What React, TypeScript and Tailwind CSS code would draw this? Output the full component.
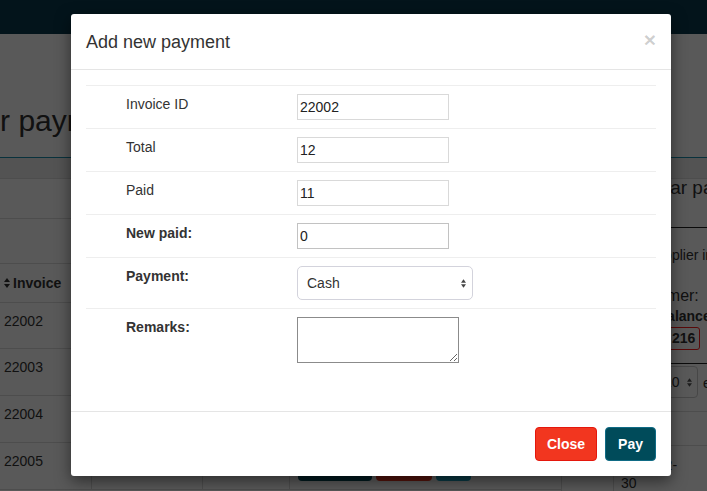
import React from 'react';

const SortIcon: React.FC<{ className?: string }> = ({ className }) => (
  <svg viewBox="0 0 6 10" className={className} fill="currentColor">
    <path d="M3 0 L6 4 H0 Z" />
    <path d="M0 6 H6 L3 10 Z" />
  </svg>
);

const labelCell = 'w-[203px] shrink-0 pl-[40px] pt-[8px] leading-[20px] text-[14px] text-[#333]';
const inputCell = 'flex-1 py-[8px] pl-[8px]';
const textInput =
  'block w-[152px] h-[26px] border bg-white px-[2px] text-[14px] text-[#222] outline-none';

const leftRows = ['22002', '22003', '22004', '22005'];

const App: React.FC = () => {
  return (
    <div className="relative w-[707px] h-[491px] overflow-hidden bg-white font-['Liberation_Sans',Arial,sans-serif] text-[#333]">
      {/* page behind the dialog */}
      <div className="h-[34px] bg-[#093a4d]" />
      <div className="h-[124px] border-b border-[#1a8fae] overflow-hidden">
        <h1 className="pt-[70px] ml-[-100px] whitespace-nowrap text-[30px] leading-[33px] text-[#333]">
          Supplier payments
        </h1>
      </div>
      <div className="h-[21px] bg-[#eeeeee] border-b border-[#ddd]" />

      <div className="flex">
        {/* left table */}
        <div className="w-[561px] shrink-0">
          <div className="h-[40px] border-b border-[#ddd]" />
          <div className="h-[45px] border-b border-[#ddd]" />
          <div className="h-[39px] border-b border-[#ddd] flex items-center pl-[4px] text-[14px] font-bold">
            <SortIcon className="w-[6px] h-[10px] mr-[3px]" />
            Invoice
          </div>
          {leftRows.map((id, i) => (
            <div
              key={id}
              className={`grid grid-cols-[92px_111px_87px_271px] border-b border-[#ddd] ${
                i === 0 ? 'h-[46px]' : 'h-[47px]'
              }`}
            >
              <div className="pl-[4px] pt-[8px] leading-[20px] text-[14px] border-r border-[#ddd]">{id}</div>
              <div className="border-r border-[#ddd]" />
              <div className="border-r border-[#ddd]" />
              <div className="flex gap-[4px] pl-[8px] pt-[8px]">
                <span className="w-[74px] h-[30px] rounded-[4px] bg-[#004b5a]" />
                <span className="w-[56px] h-[30px] rounded-[4px] bg-[#f03a22]" />
                <span className="w-[35px] h-[30px] rounded-[4px] bg-[#1aa3c4]" />
              </div>
            </div>
          ))}
        </div>

        {/* right panel */}
        <div className="flex-1 whitespace-nowrap">
          <div className="h-[51px] border-b border-[#222] pl-[68px]">
            <h2 className="mt-[-2px] text-[19px] leading-[22px]">Similar payments</h2>
          </div>
          <div className="pl-[86px] pt-[17px] text-[14px] leading-[20px]">Supplier info</div>
          <div className="pl-[64px] pt-[21px] text-[16px] leading-[20px]">Customer:</div>
          <div className="pl-[96px] text-[14px] leading-[20px] font-bold">Balance</div>
          <div className="h-[38px] border-b border-[#222] pl-[106px]">
            <span className="inline-block h-[23px] border border-[#ff1a1a] rounded-[3px] px-[4px] text-[14px] font-bold leading-[21px]">
              216
            </span>
          </div>
          <div className="h-[48px] border-b border-[#ddd] flex items-start pt-[2px] pl-[90px]">
            <span className="flex items-center h-[32px] w-[47px] border border-[#ccc] rounded-[4px] pl-[12px] text-[14px]">
              10
              <SortIcon className="ml-[7px] w-[5px] h-[9px] text-[#555]" />
            </span>
            <span className="ml-[5px] mt-[7px] text-[14px]">entries</span>
          </div>
          <div className="h-[34px] border-b border-[#ddd]" />
          <div className="flex h-[60px]">
            <div className="w-[52px] border-l border-[#ddd]" />
            <div className="border-l border-[#ddd] pl-[7px] pt-[10px] text-[14px] leading-[18px]">
              2017-12-
              <br />
              30
            </div>
          </div>
        </div>
      </div>

      {/* backdrop */}
      <div className="absolute inset-0 bg-black/[0.65]" />

      {/* dialog */}
      <div className="absolute left-[71px] top-[14px] w-[600px] bg-white rounded-[3px] shadow-[0_5px_15px_rgba(0,0,0,0.5)]">
        <div className="h-[56px] border-b border-[#e5e5e5] flex items-center justify-between px-[15px]">
          <h4 className="text-[18px] leading-[26px] text-[#333]">Add new payment</h4>
          <button className="mt-[-4px] text-[21px] font-bold leading-none text-black/20">×</button>
        </div>

        <div className="px-[15px] pt-[15px] pb-[15px]">
          <div className="mb-[25px] border-t border-[#eee]">
            {[
              ['Invoice ID', '22002'],
              ['Total', '12'],
              ['Paid', '11'],
            ].map(([label, value]) => (
              <div key={label} className="flex h-[43px] border-b border-[#eee]">
                <div className={labelCell}>{label}</div>
                <div className={inputCell}>
                  <input readOnly value={value} className={`${textInput} border-[#d9d9d9]`} />
                </div>
              </div>
            ))}
            <div className="flex h-[43px] border-b border-[#eee]">
              <div className={`${labelCell} font-bold`}>New paid:</div>
              <div className={inputCell}>
                <input readOnly value="0" className={`${textInput} border-[#c2c2c2]`} />
              </div>
            </div>
            <div className="flex h-[51px] border-b border-[#eee]">
              <div className={`${labelCell} font-bold`}>Payment:</div>
              <div className={inputCell}>
                <div className="flex items-center justify-between w-[176px] h-[34px] border border-[#d3d3dc] rounded-[5px] pl-[9px] pr-[6px] text-[14px] text-[#333]">
                  <span>Cash</span>
                  <SortIcon className="w-[5px] h-[9px] text-[#444]" />
                </div>
              </div>
            </div>
            <div className="flex h-[62px]">
              <div className={`${labelCell} font-bold`}>Remarks:</div>
              <div className={inputCell}>
                <textarea className="block w-[162px] h-[46px] border border-[#8b8b8b] bg-white outline-none" />
              </div>
            </div>
          </div>
        </div>

        <div className="border-t border-[#e5e5e5] p-[15px] flex justify-end gap-[8px]">
          <button className="h-[34px] px-[11px] rounded-[4px] border border-[#e4170c] bg-[#f2361f] text-[14px] font-bold text-white">
            Close
          </button>
          <button className="h-[34px] px-[12px] rounded-[4px] border border-[#0f6b85] bg-[#004b5a] text-[14px] font-bold text-white">
            Pay
          </button>
        </div>
      </div>
    </div>
  );
};

export default App;
